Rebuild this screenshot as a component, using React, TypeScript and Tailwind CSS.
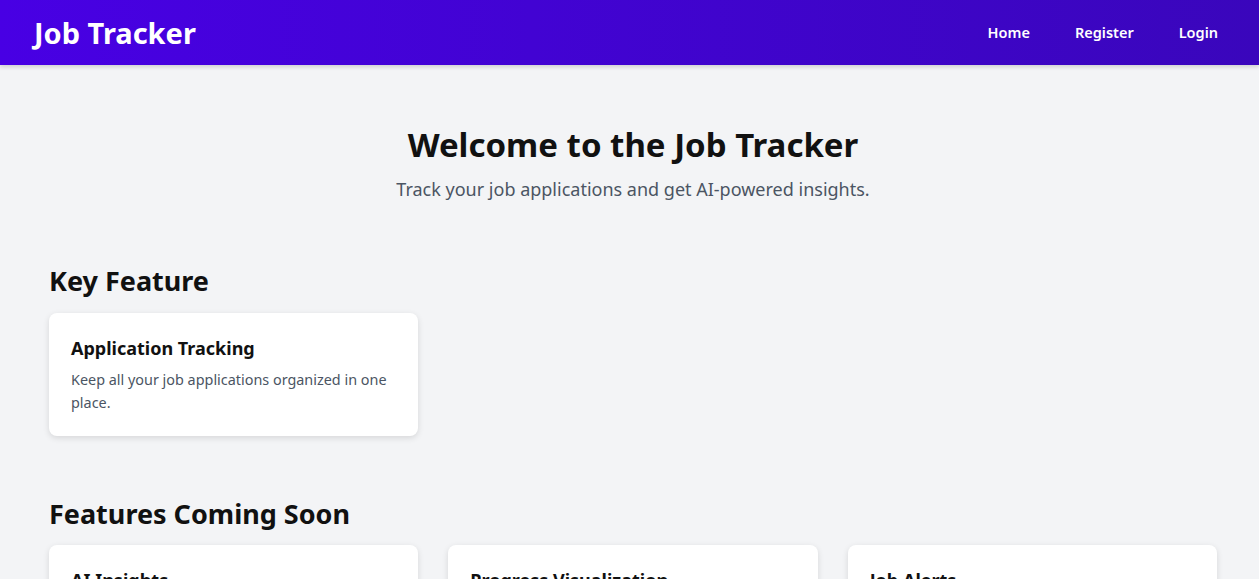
import React from "react";

const font = { fontFamily: '"Noto Sans", "Open Sans", sans-serif' };

function Card({ title, desc }: { title: string; desc: string }) {
  return (
    <div className="bg-white rounded-lg shadow-[0_2px_6px_rgba(0,0,0,0.12)] px-[22px] pt-[21px] pb-[22px] h-[123px]">
      <h3 className="text-[18px] leading-[28px] font-bold text-[#111]">{title}</h3>
      <p className="mt-[6px] text-[14.4px] leading-[23px] text-[#4b5563]">{desc}</p>
    </div>
  );
}

export default function App() {
  return (
    <div className="min-h-screen bg-[#f3f4f6]" style={font}>
      <header className="h-[65px] bg-gradient-to-r from-[#4800e4] to-[#3a06bc] flex items-center justify-between pl-[34px] pr-[41px] shadow-[0_2px_4px_rgba(0,0,0,0.15)] relative">
        <div className="text-white text-[29px] font-bold">Job Tracker</div>
        <nav className="flex items-center gap-[45px] text-white text-[14.5px] font-semibold">
          <span>Home</span>
          <span>Register</span>
          <span>Login</span>
        </nav>
      </header>
      <main className="pl-[49px] pr-[42px]">
        <section className="text-center pt-[59px]">
          <h1 className="text-[33px] leading-[42px] font-bold text-[#111]">Welcome to the Job Tracker</h1>
          <p className="mt-[9px] text-[18px] leading-[28px] text-[#4b5563]">
            Track your job applications and get AI-powered insights.
          </p>
        </section>
        <section className="mt-[60px]">
          <h2 className="text-[27px] leading-[36px] font-bold text-[#111]">Key Feature</h2>
          <div className="grid grid-cols-3 gap-[30px] mt-[14px]">
            <Card title="Application Tracking" desc="Keep all your job applications organized in one place." />
          </div>
        </section>
        <section className="mt-[60px]">
          <h2 className="text-[27px] leading-[36px] font-bold text-[#111]">Features Coming Soon</h2>
          <div className="grid grid-cols-3 gap-[30px] mt-[13px]">
            <Card title="AI Insights" desc="Get personalized insights on your job search." />
            <Card title="Progress Visualization" desc="Visualize your job search progress with charts." />
            <Card title="Job Alerts" desc="Receive alerts for new job opportunities." />
          </div>
        </section>
      </main>
    </div>
  );
}
